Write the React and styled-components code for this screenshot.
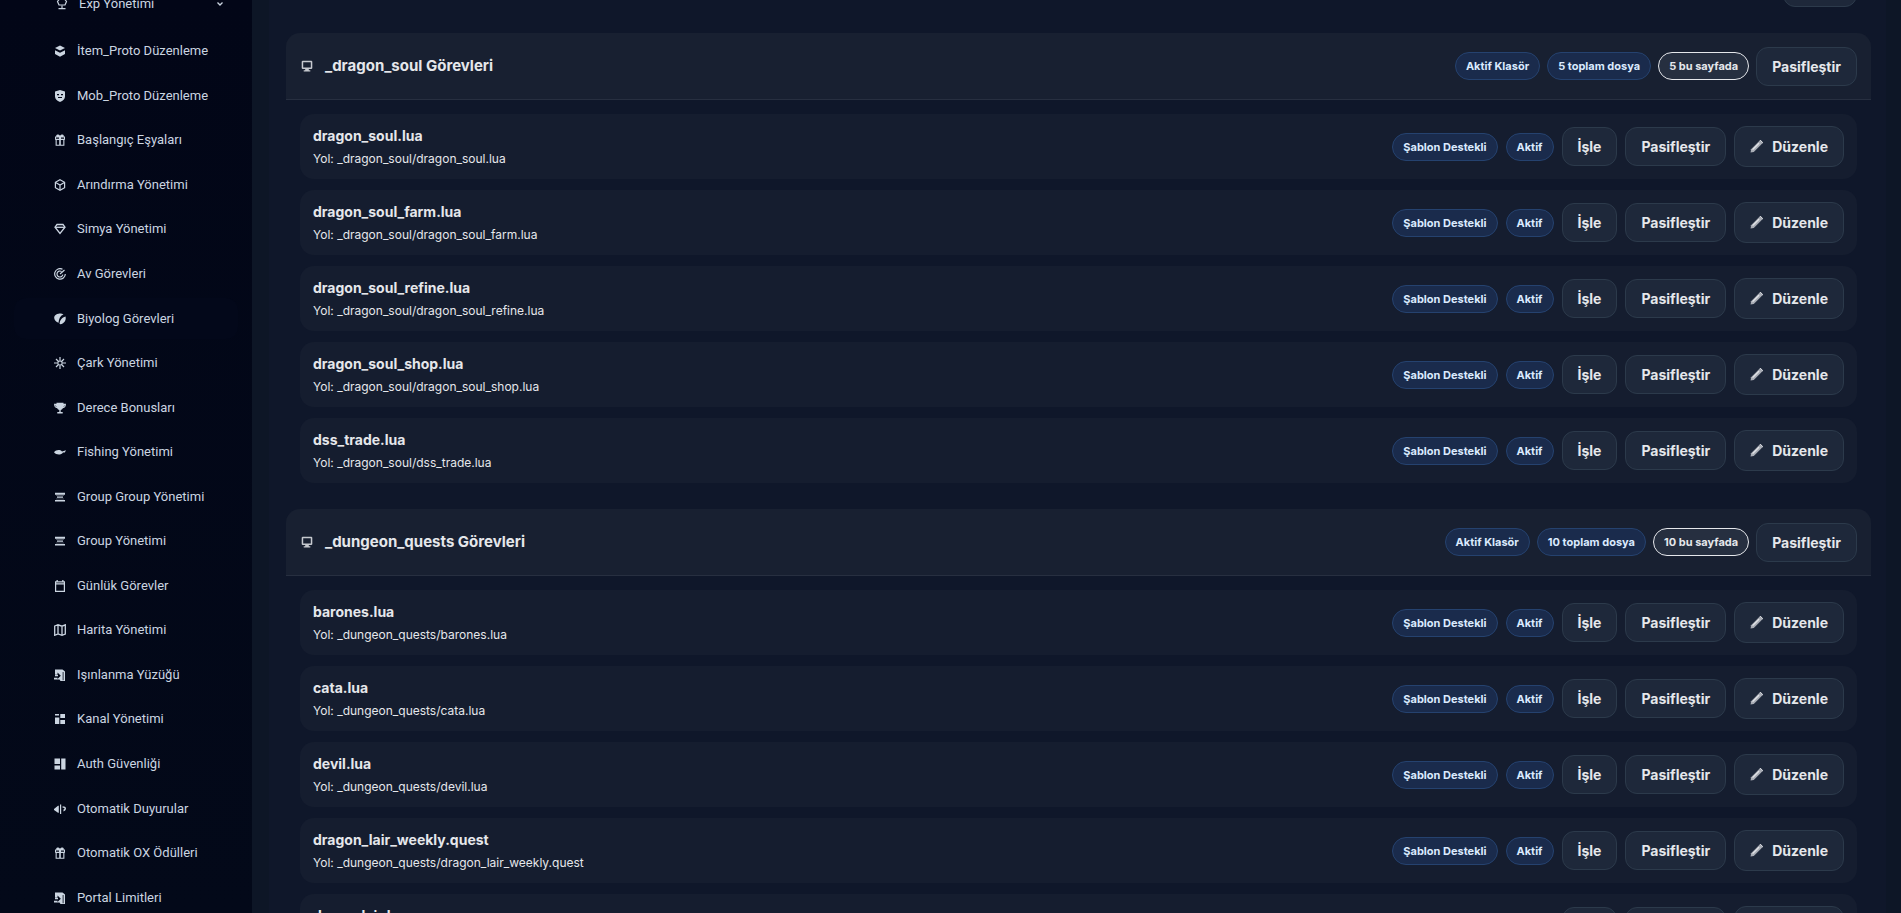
import React from 'react'
import styled, { createGlobalStyle } from 'styled-components'

const ICONS = {
    exp: <><path d="M3.500 1h5l2 2.500-1.500 3.500H3L1.500 3.500z" fill="none" stroke="currentColor" strokeWidth="1.200" /><path d="M5.400 7.500h1.200v2.500H5.400zM2.500 10h7v1.200h-7z" /></>,
    layers: <><path d="M6 .600l5 2.500-5 2.300L1 3.100z" /><path d="M1 5.200l5 2.600 5-2.600v3.900l-5 2.600-5-2.600z" /></>,
    shield: <path fillRule="evenodd" d="M6 0l5 1.500v5c0 2.500-2 4.600-5 5.500-3-.900-5-3-5-5.500v-5zM3 4v1.200h2V4zm4 0v1.200h2V4zM4 7v1h4V7z" />,
    gift: <path fillRule="evenodd" d="M3.500.600c1 0 2 .400 2.500 1.100C6.500 1 7.500.600 8.500.600c1 0 1.600 1 1.200 2H11v3.200h-.600v6H1.600v-6H1V2.600h1.300c-.400-1 .200-2 1.200-2zM2 3.600v1.200h3V3.600zm5 0v1.200h3V3.600zM2.700 6v4.800h2.500V6zm4.100 0v4.800h2.500V6z" />,
    cube: <g fill="none" stroke="currentColor" strokeWidth="1.200"><path d="M6 .700l4.600 2.600v5.400L6 11.300 1.400 8.700V3.300z" /><path d="M1.600 3.500L6 6l4.400-2.500M6 6v5" /></g>,
    gem: <g fill="none" stroke="currentColor" strokeWidth="1.300"><path d="M3 1.500h6l2 2.700-5 6.300-5-6.300z" /><path d="M1.500 4.300h9" /></g>,
    target: <g fill="none" stroke="currentColor" strokeWidth="1.200"><path d="M8.500 1.200A5.300 5.300 0 1 0 11.300 6" /><path d="M7.500 3.400A3 3 0 1 0 8.900 6.700M6 6l4.500-4" /></g>,
    leaf: <path d="M4.500.800C6 .300 8 .300 9.500 1.400 6.500 2.500 5 5 4.600 9.800 1.500 8.800-.500 6 .400 3.500 1 2 2.500 1.100 4.500.800zM11.500 3.500c.800 3-.500 5.500-2.500 6.800-1 .700-2.300 1-3.400.800C5.700 7 8 4.500 11.500 3.500z" />,
    sun: <g fill="none" stroke="currentColor" strokeWidth="1.200"><circle cx="6" cy="6" r="2.200" /><path d="M6 0v3M6 9v3M0 6h3M9 6h3M2 2l2 2M8 8l2 2M10 2L8 4M4 8l-2 2" /></g>,
    trophy: <path fillRule="evenodd" d="M2.500.800h7v1H12c0 2.800-1.100 4.200-3.200 4.400C8.200 7.300 7.500 7.800 6.700 8v2h2v1.500H3.300V10h2V8c-.800-.200-1.500-.700-2.100-1.800C1.100 6 0 4.600 0 1.800h2.500zM1.200 2.900c.100 1 .600 1.800 1.500 2zm9.600 0L9.300 4.900c.900-.200 1.400-1 1.500-2z" />,
    fish: <path d="M0 6.300C2 3.600 6 3.400 8 5.500L12 4.300 10.800 6.500H9C7 9.500 2 9 0 6.300z" />,
    bars: <><path d="M1 1.800h10v2H1zM3 5.400h6v1.400H3zM1 9h10v1.600H1z" /><path d="M2 3.800h8v1.200H2zM2 7.400h8v1H2z" opacity=".35" /></>,
    calendar: <path fillRule="evenodd" d="M2.500 0h1.300v1.200h4.400V0h1.300v1.200H11V12H1V1.200h1.500zM2.200 2.400v.900h7.600v-.900zM2.200 4.500v6.300h7.600V4.500z" />,
    map: <path d="M.700 2L4 .800l4 1.400 3.300-1.400V10L8 11.300 4 10 .700 11.300zM4 1v9M8 2.200v9" fill="none" stroke="currentColor" strokeWidth="1.300" />,
    portal: <path fillRule="evenodd" d="M1 .500h7.500l2.500 2V12H6.500l-1-1.500H0V8.800h3.500v1.300L6.800 6.800 3.500 3.500v2.300H1zM1 6h3v1.300H1zM8.700 3v8.200h.800V3z" />,
    board: <path d="M1 1h4v1.500H1zM6.300 1H11v4H6.300zM1 4.400h4.300V11H1zM6.300 7H11v4H6.300z" />,
    panels: <path d="M.500.500H6v5.500H.500zM7.200.500h4.300v11H7.200zM.500 7.500H6v4H.500z" />,
    speaker: <path d="M0 6l4-3.200h.800v7H4L0 7zM6 1.500h1.200v9.500H6zM8.600 3.300c2 0 3.400.700 3.400 2.200S10.600 8 9.500 8.500v-2c.800-.200 1-.500 1-1s-.500-.800-1.900-.800z" />,
    monitor: <g opacity=".85"><path fillRule="evenodd" d="M1.500.800h9l.800.800v6.600l-.800.800H7.800v1.200h1.500v1.400H2.700v-1.400h1.500V9H1.500L.700 8.200V1.600zM2.200 2.200v5.200h7.600V2.200z" /></g>,
    pencil: <><path d="M9 .500l2.500 2.500-8 8L.500 11.500 1 8.500z" opacity=".7" /><path d="M8.800.300l1-.300L12 2.200l-.400 1zM2 8.500L8 2.500l.8.800-6 6z" /></>,
}

const Icon = ({ name, size = 12 }) => (
    <svg width={size} height={size} viewBox="0 0 12 12" fill="currentColor" aria-hidden="true">
        {ICONS[name]}
    </svg>
)

const NAV = [
    ['layers', 'İtem_Proto Düzenleme'],
    ['shield', 'Mob_Proto Düzenleme'],
    ['gift', 'Başlangıç Eşyaları'],
    ['cube', 'Arındırma Yönetimi'],
    ['gem', 'Simya Yönetimi'],
    ['target', 'Av Görevleri'],
    ['leaf', 'Biyolog Görevleri', true],
    ['sun', 'Çark Yönetimi'],
    ['trophy', 'Derece Bonusları'],
    ['fish', 'Fishing Yönetimi'],
    ['bars', 'Group Group Yönetimi'],
    ['bars', 'Group Yönetimi'],
    ['calendar', 'Günlük Görevler'],
    ['map', 'Harita Yönetimi'],
    ['portal', 'Işınlanma Yüzüğü'],
    ['board', 'Kanal Yönetimi'],
    ['panels', 'Auth Güvenliği'],
    ['speaker', 'Otomatik Duyurular'],
    ['gift', 'Otomatik OX Ödülleri'],
    ['portal', 'Portal Limitleri'],
]

const FOLDERS = [
    {
        name: '_dragon_soul',
        total: 5,
        files: ['dragon_soul.lua', 'dragon_soul_farm.lua', 'dragon_soul_refine.lua', 'dragon_soul_shop.lua', 'dss_trade.lua'],
    },
    {
        name: '_dungeon_quests',
        total: 10,
        files: ['barones.lua', 'cata.lua', 'devil.lua', 'dragon_lair_weekly.quest', 'dragonlair.lua'],
    },
]

const QuestFile = ({ folder, file }) => (
    <FileRow>
        <div>
            <FileName>{file}</FileName>
            <FilePath>Yol: {folder}/{file}</FilePath>
        </div>
        <Actions $gap={8}>
            <Pill>Şablon Destekli</Pill>
            <Pill>Aktif</Pill>
            <Button type="button">İşle</Button>
            <Button type="button">Pasifleştir</Button>
            <Button type="button" $tall><Icon name="pencil" size={13} />Düzenle</Button>
        </Actions>
    </FileRow>
)

const Folder = ({ name, total, files }) => (
    <section>
        <FolderHead>
            <FolderTitle><Icon name="monitor" />{name} Görevleri</FolderTitle>
            <Actions $gap={7}>
                <Pill>Aktif Klasör</Pill>
                <Pill>{total} toplam dosya</Pill>
                <Pill $outline>{total} bu sayfada</Pill>
                <Button type="button">Pasifleştir</Button>
            </Actions>
        </FolderHead>
        <FileList>
            {files.map(file => <QuestFile key={file} folder={name} file={file} />)}
        </FileList>
    </section>
)

const App = () => (
    <>
    <GlobalStyle />
    <Page>
        <Sidebar>
            <NavList>
                <NavItem $group>
                    <NavLink href="#exp" $group>
                        <Icon name="exp" />
                        Exp Yönetimi
                        <Chevron viewBox="0 0 8 8"><path d="M1.500 2.500L4 5l2.500-2.500" /></Chevron>
                    </NavLink>
                </NavItem>
                {NAV.map(([icon, label, active]) => (
                    <NavItem key={label}>
                        <NavLink href="#nav" $active={active}><Icon name={icon} />{label}</NavLink>
                    </NavItem>
                ))}
            </NavList>
        </Sidebar>
        <Main>
            <Panel>
                <Toolbar>
                    <Button type="button">Yenile</Button>
                </Toolbar>
                {FOLDERS.map(folder => <Folder key={folder.name} {...folder} />)}
            </Panel>
        </Main>
    </Page>
    </>
)

const GlobalStyle = createGlobalStyle`
    * {
        box-sizing: border-box;
    }
    body {
        margin: 0;
        overflow: hidden;
        background: #0f172a;
        color: #e5e7eb;
        font-family: Inter, "Liberation Sans", sans-serif;
    }
`

const Page = styled.div`
    display: flex;
    height: 100vh;
    overflow: hidden;
`

const Sidebar = styled.aside`
    flex: 0 0 252px;
    padding: 0 14px;
    overflow: hidden;
    background: linear-gradient(#020617, #030919);
`

/* the menu is scrolled, so it starts above the window and runs out below it */
const NavList = styled.ul`
    display: flex;
    flex-direction: column;
    height: calc(100vh + 25px);
    margin: -18px 0 0;
    padding: 0;
    list-style: none;
`

const NavItem = styled.li`
    display: flex;
    flex: ${p => (p.$group ? '0 0 44px' : 1)};
    margin-bottom: ${p => (p.$group ? 3 : 0)}px;
    padding: 2px 0;
`

const NavLink = styled.a`
    display: flex;
    flex: 1;
    align-items: center;
    gap: 11px;
    padding: 0 14px 0 ${p => (p.$group ? 42 : 40)}px;
    border-radius: 12px;
    background: ${p => (p.$active ? '#03081a' : 'transparent')};
    color: #cbd5e1;
    font-family: Roboto, "Liberation Sans", sans-serif;
    font-size: 13px;
    line-height: 20px;
    text-decoration: none;
`

const Chevron = styled.svg`
    width: 8px;
    height: 8px;
    margin-left: auto;
    fill: none;
    stroke: currentColor;
    stroke-width: 1.300;
`

const Main = styled.main`
    flex: 1;
    min-width: 0;
    padding: 0 15px 0 17px;
    background: #0d1626;
`

const Panel = styled.div`
    min-height: 100vh;
    padding: 0 15px 0 17px;
    background: #0f172a;
`

const Toolbar = styled.div`
    display: flex;
    justify-content: flex-end;
    margin-top: -32px;
    padding: 0 14px 26px;
`

const FolderHead = styled.header`
    display: flex;
    align-items: center;
    justify-content: space-between;
    height: 67px;
    padding: 0 14px 0 15px;
    border-bottom: 1px solid #272f40;
    border-radius: 14px 14px 0 0;
    background: #182031;
`

const FolderTitle = styled.h2`
    display: flex;
    align-items: center;
    gap: 12px;
    margin: 0;
    font-size: 15px;
    font-weight: 700;
    line-height: 20px;
`

const FileList = styled.div`
    display: flex;
    flex-direction: column;
    gap: 11px;
    padding: 14px 14px 26px;
`

const FileRow = styled.article`
    display: flex;
    align-items: center;
    justify-content: space-between;
    min-height: 65px;
    padding: 8px 13px;
    border-radius: 14px;
    background: #151d2f;
`

const FileName = styled.h3`
    margin: 0;
    font-size: 14px;
    font-weight: 700;
    line-height: 22px;
`

const FilePath = styled.p`
    margin: 3px 0 0;
    font-size: 12px;
    line-height: 18px;
`

const Actions = styled.div`
    display: flex;
    align-items: center;
    gap: ${p => p.$gap}px;
`

const Pill = styled.span`
    padding: 0 10px;
    border: 1px solid ${p => (p.$outline ? '#e5e7eb' : '#25426f')};
    border-radius: 14px;
    background: ${p => (p.$outline ? '#262f40' : '#1a2b4c')};
    color: ${p => (p.$outline ? '#e5e7eb' : '#dbeafe')};
    font-size: 11px;
    font-weight: 700;
    line-height: 26px;
`

const Button = styled.button`
    display: inline-flex;
    align-items: center;
    gap: 9px;
    height: ${p => (p.$tall ? 41 : 39)}px;
    padding: 0 15px;
    border: 1px solid #2c3a4b;
    border-radius: 12px;
    background: #1e283a;
    color: #e5e7eb;
    font-family: inherit;
    font-size: 14px;
    font-weight: 700;
`

export default App
